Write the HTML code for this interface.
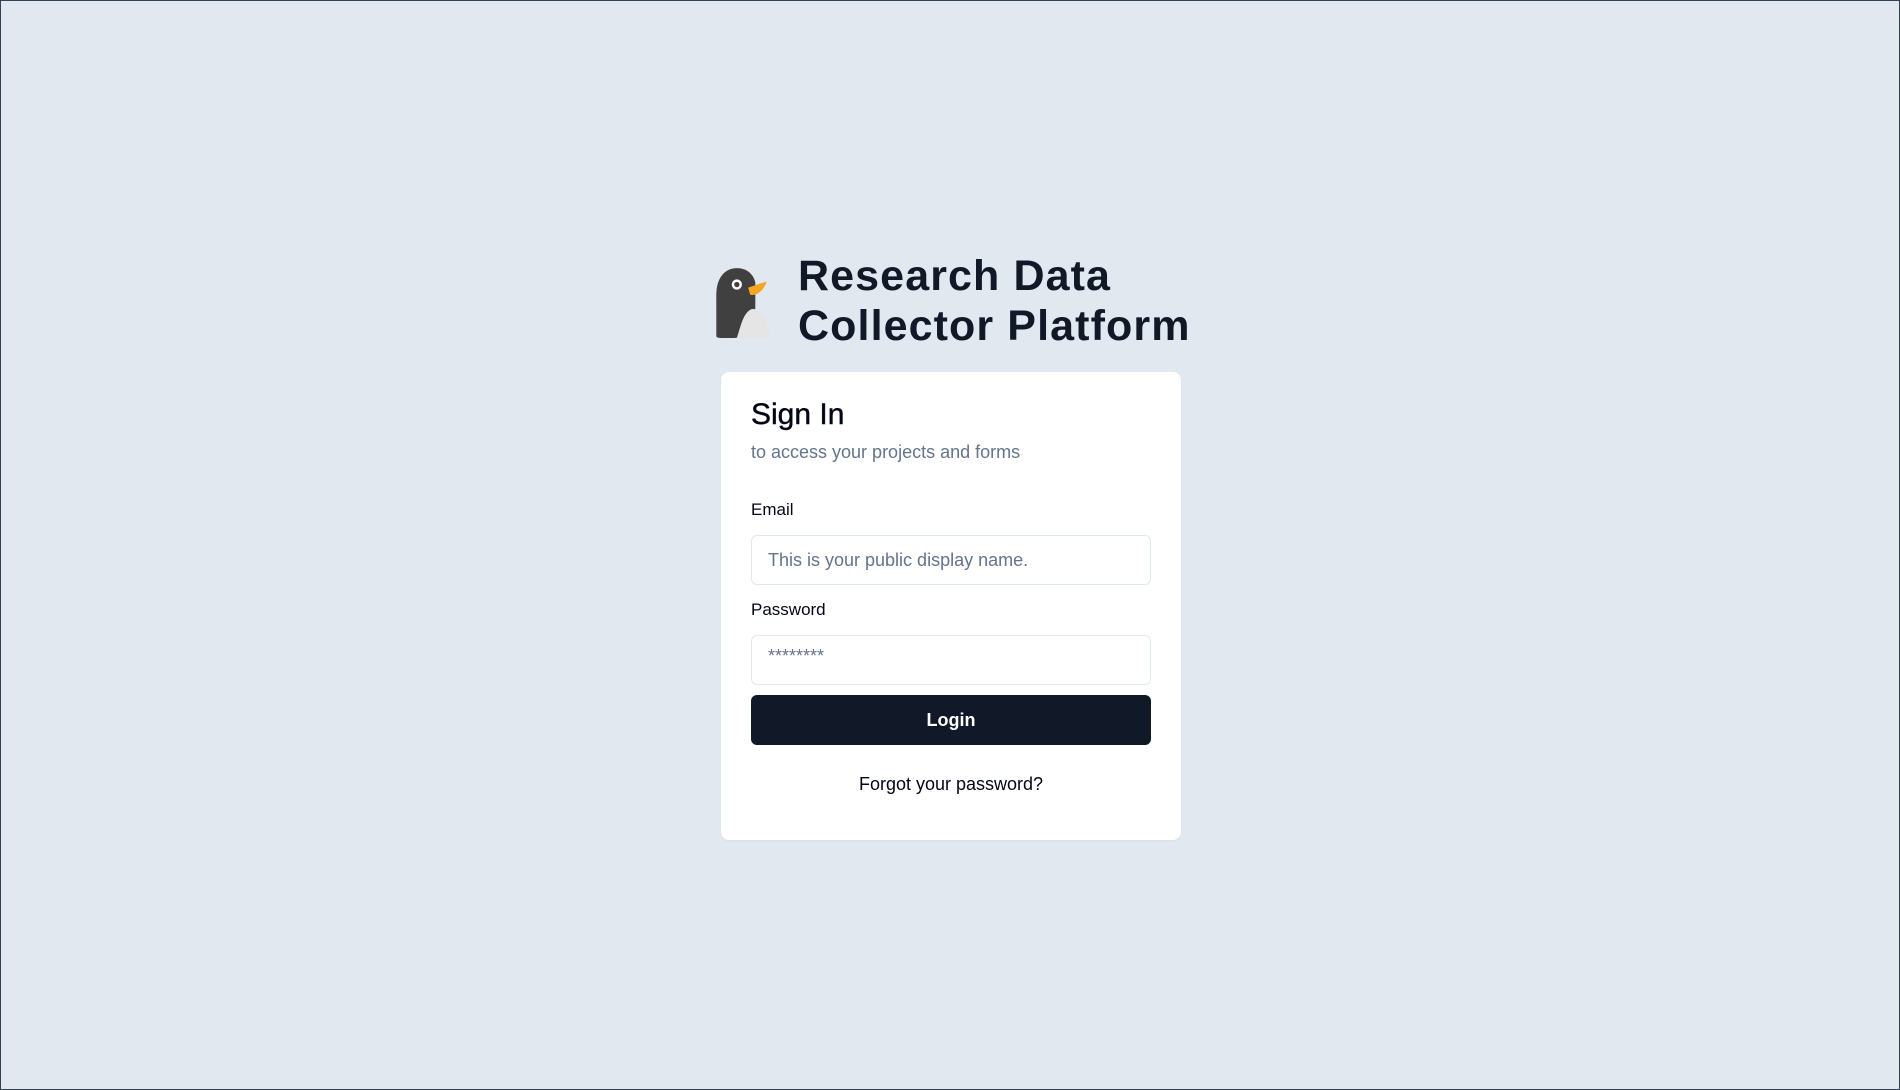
<!DOCTYPE html>
<html><head><meta charset="utf-8"><style>
*{box-sizing:border-box;margin:0;padding:0}
body{width:1900px;height:1090px;background:#e2e8f0;font-family:"Liberation Sans",sans-serif;position:relative;overflow:hidden;border:1px solid #334155}
.logo{position:absolute;left:712px;top:263px}
.title{position:absolute;left:797px;top:250px;font-size:43px;font-weight:bold;line-height:50px;color:#111827;letter-spacing:1.1px}
.card{position:absolute;left:720px;top:371px;width:460px;height:468px;background:#fff;border-radius:8px;box-shadow:0 1px 2px rgba(0,0,0,.05)}
.h{position:absolute;left:30px;top:26px;font-size:30px;color:#020617;-webkit-text-stroke:0.4px #020617}
.sub{position:absolute;left:30px;top:70px;font-size:18px;color:#64748b}
.lbl{position:absolute;left:30px;font-size:17px;color:#020617}
.inp{position:absolute;left:30px;width:400px;height:50px;border:1px solid #e2e8f0;border-radius:6px;font-size:18px;color:#64748b;padding-left:16px;line-height:48px}
.btn{position:absolute;left:30px;top:323px;width:400px;height:50px;background:#111827;border-radius:6px;color:#fff;font-weight:bold;font-size:18px;text-align:center;line-height:50px}
.fg{position:absolute;left:0;width:460px;top:402px;text-align:center;font-size:18px;color:#020617}
</style></head><body>
<svg class="logo" width="60" height="76" viewBox="0 0 56 74">
<path d="M2 70 L2 30 C2 14 10 4 22 4 C32 4 38 10 40 18 L40 40 C40 56 34 70 20 72 L6 72 C3 72 2 71 2 70Z" fill="#404040"/>
<path d="M22 72 C26 60 28 48 36 44 C46 42 50 56 56 72Z" fill="#e5e5e5"/>
<path d="M33 23 L51 17 C48 26 42 31 35 30Z" fill="#f5a524"/>
<circle cx="22" cy="20" r="5" fill="#fff"/><circle cx="22" cy="20" r="2.6" fill="#404040"/>
</svg>
<div class="title">Research Data<br>Collector Platform</div>
<div class="card">
<div class="h">Sign In</div>
<div class="sub">to access your projects and forms</div>
<div class="lbl" style="top:128px">Email</div>
<div class="inp" style="top:163px">This is your public display name.</div>
<div class="lbl" style="top:228px">Password</div>
<div class="inp" style="top:263px;line-height:40px">********</div>
<div class="btn">Login</div>
<div class="fg">Forgot your password?</div>
</div>
</body></html>
